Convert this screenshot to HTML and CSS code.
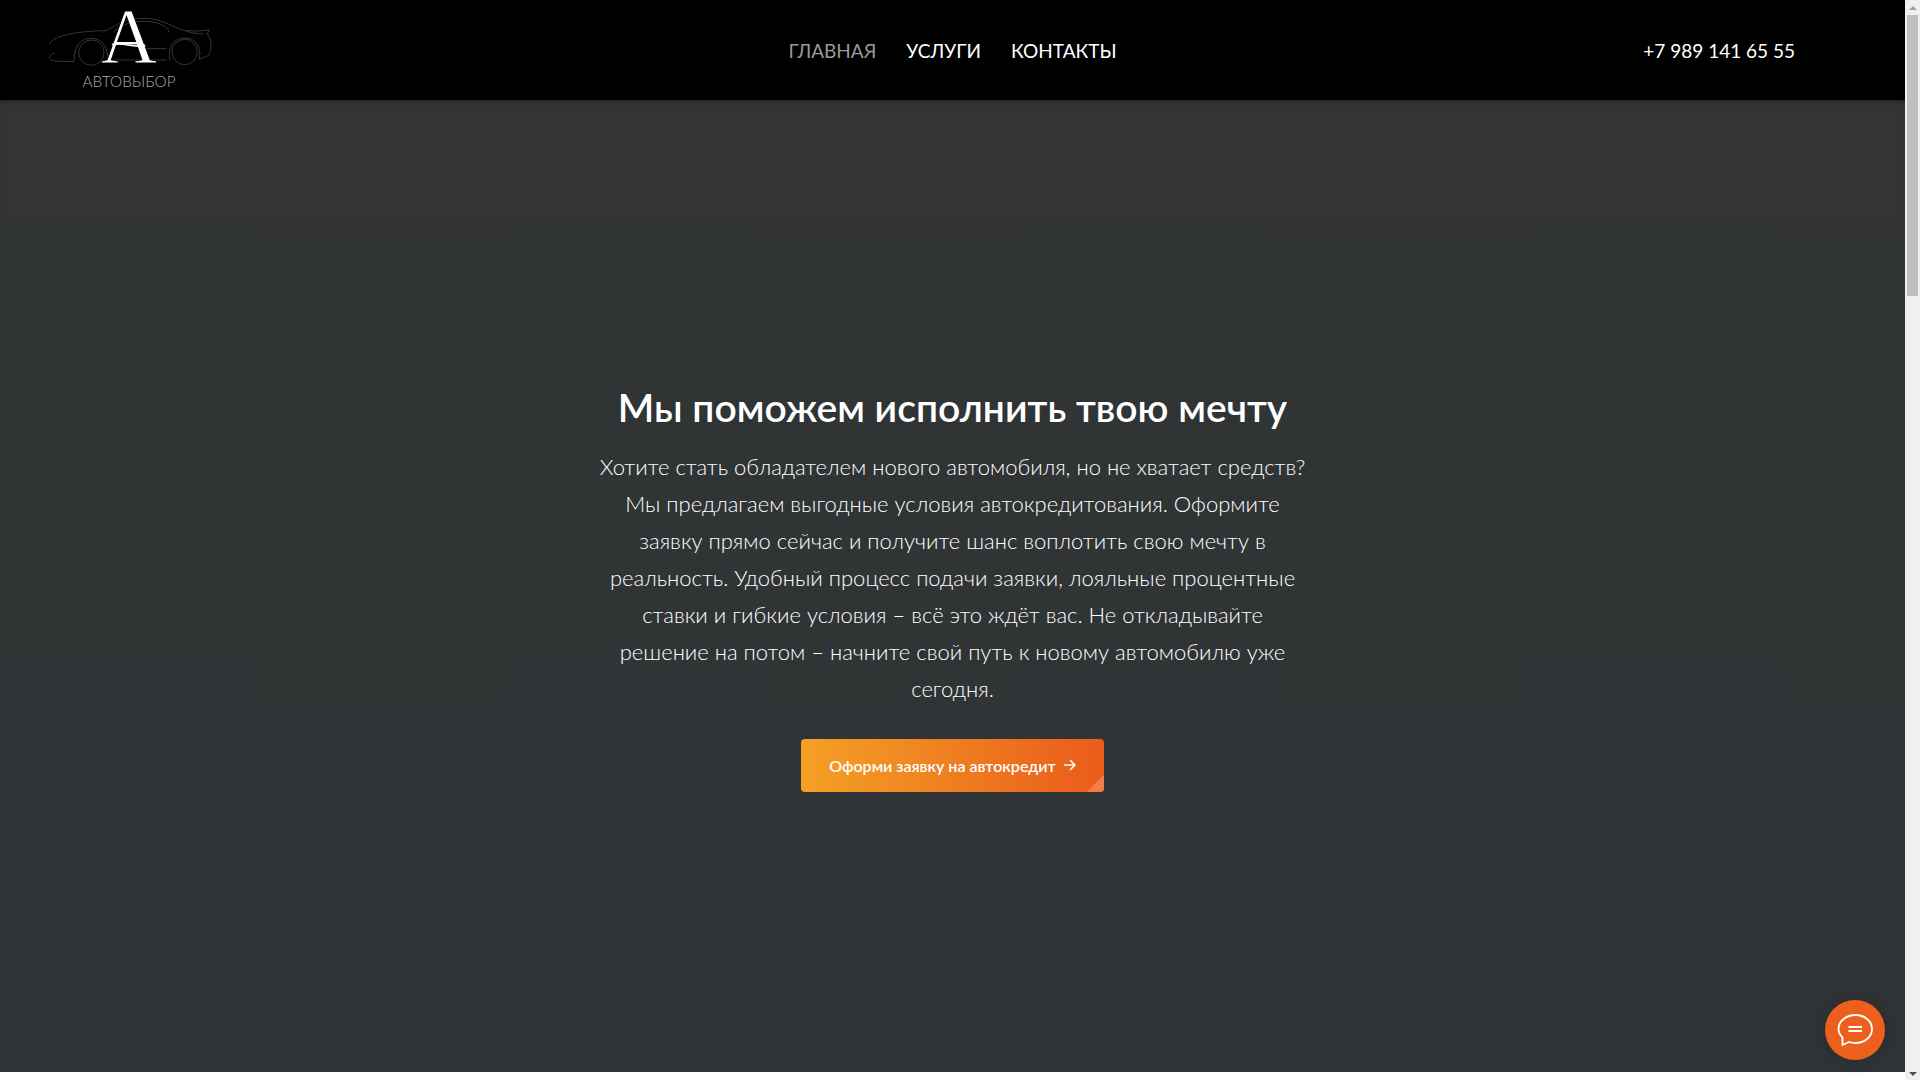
FILE: index.html
```
<!DOCTYPE html>
<html lang="ru">
<head>
  <meta charset="UTF-8">
  <meta name="viewport" content="width=device-width, initial-scale=1.0">
  <title>Автовыбор</title>
  <link rel="stylesheet" href="styles.css">
</head>
<body>
  <div class="page">
    <header class="header">
      <a class="logo" href="#" aria-label="Автовыбор">
        <svg viewBox="0 0 600 300" width="200" height="100">
          <!-- car outline -->
          <g fill="none" stroke="#363636" stroke-width="3">
            <path d="M58 134C64 112 118 94 230 92C262 74 282 54 345 55C398 56 428 82 462 91C490 94 515 94 538 89L532 102C546 118 546 150 536 166L508 178C514 140 500 114 464 114C428 114 412 146 420 180"/>
            <path d="M74 160C50 164 52 185 88 184L132 185C132 142 148 115 184 115C220 115 236 148 232 182"/>
            <path d="M250 96C282 64 340 58 378 68C404 76 416 86 416 96"/>
            <path d="M248 180H410M330 146H410M462 91C478 98 500 101 520 102"/>
            <circle cx="184" cy="158" r="38"/>
            <circle cx="464" cy="156" r="38"/>
          </g>
          <text class="logo-letter" x="297" y="186" text-anchor="middle">А</text>
          <path d="M246 134C286 124 302 146 346 136" fill="none" stroke="#fff" stroke-width="5"/>
          <text class="logo-name" x="297" y="261" text-anchor="middle">АВТОВЫБОР</text>
        </svg>
      </a>
      <nav class="menu">
        <a class="active" href="#">ГЛАВНАЯ</a>
        <a href="#services">УСЛУГИ</a>
        <a href="#contacts">КОНТАКТЫ</a>
      </nav>
      <a class="phone" href="tel:+79891416555">+7 989 141 65 55</a>
    </header>
    <main class="hero">
      <h1>Мы поможем исполнить твою мечту</h1>
      <p>
        Хотите стать обладателем нового автомобиля, но не хватает средств?<br>
        Мы предлагаем выгодные условия автокредитования. Оформите<br>
        заявку прямо сейчас и получите шанс воплотить свою мечту в<br>
        реальность. Удобный процесс подачи заявки, лояльные процентные<br>
        ставки и гибкие условия – всё это ждёт вас. Не откладывайте<br>
        решение на потом – начните свой путь к новому автомобилю уже<br>
        сегодня.
      </p>
      <button class="cta" type="button">
        Оформи заявку на автокредит
        <svg viewBox="0 0 12 12" width="12" height="12" fill="none" stroke="currentColor" stroke-width="1.5">
          <path d="M0 6H11M6 1L11 6L6 11"/>
        </svg>
      </button>
    </main>
  </div>
  <div class="scrollbar" aria-hidden="true">
    <span class="arrow up"></span>
    <span class="thumb"></span>
    <span class="arrow down"></span>
  </div>
  <button class="chat" type="button" aria-label="Чат">
    <svg viewBox="0 0 36 34" width="36" height="34" fill="none" stroke="#fff" stroke-width="1.8">
      <path d="M18.500 2C27.500 2 35 8 35 16C35 24 27.500 30 18.500 30C16 30 14 29.800 12 29L5.500 32V24.500C3 22 1.500 19.500 1.500 16C1.500 8 9.500 2 18.500 2Z" stroke-linejoin="round"/>
      <path d="M11.500 14H25M11.500 18H25"/>
    </svg>
  </button>
</body>
</html>
```
FILE: styles.css
```
* {
  box-sizing: border-box;
}
body {
  margin: 0;
  display: flex;
  height: 100vh;
  overflow: hidden;
  background: #fff;
  color: #fff;
  font-family: Lato, "Open Sans", sans-serif;
}
a {
  color: inherit;
  text-decoration: none;
}
.page {
  flex: 1;
  display: flex;
  flex-direction: column;
  padding-bottom: 8px;
}
.header {
  display: grid;
  grid-template-columns: 1fr auto 1fr;
  align-items: center;
  height: 100px;
  background: #000;
  font-size: 19px;
}
.logo {
  display: block;
  height: 100px;
  padding-left: 30px;
}
.logo svg {
  overflow: visible;
}
/* the black stroke thins the letter */
.logo-letter {
  fill: #fff;
  stroke: #000;
  stroke-width: 3px;
  font-family: "Liberation Serif", serif;
  font-size: 236px;
}
.logo-name {
  fill: #aaa;
  font-weight: 300;
  font-size: 46px;
}
.menu {
  display: flex;
  gap: 30px;
}
.menu .active {
  color: #999;
}
.phone {
  justify-self: end;
  padding-right: 110px;
}
.hero {
  flex: 1;
  display: flex;
  flex-direction: column;
  align-items: center;
  justify-content: center;
  text-align: center;
  background: linear-gradient(#333435, #303435 30%, #303436);
  box-shadow: inset 0 4px 4px -2px rgba(0, 0, 0, 0.3);
}
.hero h1 {
  margin: 0 0 15px;
  font-size: 39px;
  font-weight: 600;
  line-height: 52px;
}
.hero p {
  margin: 0 0 32px;
  font-size: 22px;
  font-weight: 300;
  line-height: 37px;
}
.cta {
  position: relative;
  display: flex;
  align-items: center;
  gap: 8px;
  height: 53px;
  padding: 0 28px;
  border: 0;
  border-radius: 4px;
  overflow: hidden;
  background: linear-gradient(90deg, #f4a125, #ea5b1b);
  color: #fff;
  font-family: inherit;
  font-size: 16px;
  font-weight: 600;
}
/* folded corner */
.cta::after {
  content: "";
  position: absolute;
  right: 0;
  bottom: 0;
  width: 18px;
  height: 18px;
  background: linear-gradient(135deg, transparent 50%, #ef7c49 50%);
}
.scrollbar {
  display: flex;
  flex-direction: column;
  align-items: center;
  width: 15px;
  background: #f0f0f0;
}
.thumb {
  width: 11px;
  height: 26%;
  background: #c0c0c0;
}
.arrow {
  border: 4px solid transparent;
}
.arrow.up {
  margin: 2px 0 5px;
  border-bottom-color: #a0a0a0;
}
.arrow.down {
  margin-top: auto;
  border-top-color: #505050;
}
.chat {
  position: fixed;
  right: 35px;
  bottom: 20px;
  display: flex;
  align-items: center;
  justify-content: center;
  width: 60px;
  height: 60px;
  padding: 0;
  border: 0;
  border-radius: 50%;
  background: #ec5f1c;
  box-shadow: 0 0 20px rgba(0, 0, 0, 0.2);
}
```
